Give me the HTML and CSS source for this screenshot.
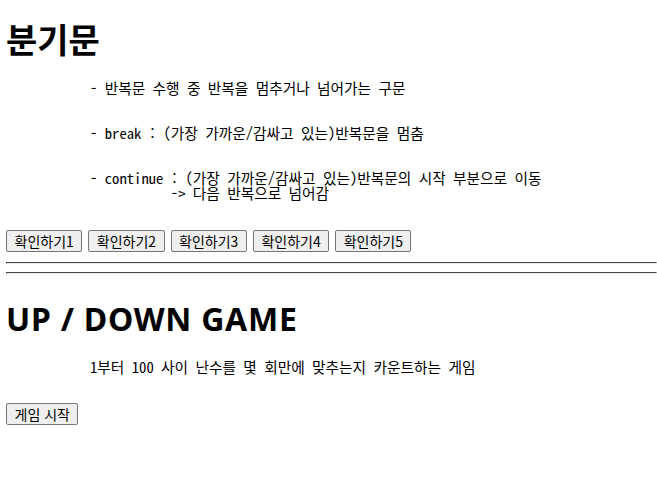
FILE: index.html
```html
<!DOCTYPE html>
<html lang="ko">
<head>
<meta charset="utf-8">
<title>분기문</title>
<link rel="stylesheet" href="styles.css">
</head>
<body>
<h1 class="title first">분기문</h1>
<pre class="desc">- 반복문 수행 중 반복을 멈추거나 넘어가는 구문


- break : (가장 가까운/감싸고 있는)반복문을 멈춤


- continue : (가장 가까운/감싸고 있는)반복문의 시작 부분으로 이동
           -&gt; 다음 반복으로 넘어감</pre>
<div class="btns">
<button class="btn">확인하기1</button>
<button class="btn">확인하기2</button>
<button class="btn">확인하기3</button>
<button class="btn">확인하기4</button>
<button class="btn">확인하기5</button>
</div>
<hr class="rule">
<hr class="rule">
<h1 class="title second">UP / DOWN GAME</h1>
<pre class="desc game">1부터 100 사이 난수를 몇 회만에 맞추는지 카운트하는 게임</pre>
<button class="btn start">게임 시작</button>
</body>
</html>
```
FILE: styles.css
```css
html, body {
  background: #ffffff;
}
body {
  margin: 0 0 0 6px;
  padding-top: 0;
  color: #000000;
  font-family: "Noto Sans", "Noto Sans CJK KR", sans-serif;
}
.title {
  font-family: "Noto Sans", "Noto Sans CJK KR", sans-serif;
  font-weight: 700;
  font-size: 32px;
  line-height: 40px;
  margin: 0;
}
.title.first {
  font-size: 34px;
  margin: 20px 0 19.5px;
}
.title.second {
  letter-spacing: 0.75px;
  margin: 25px 0 20px;
}
.desc {
  font-family: "Noto Sans Mono CJK KR", "Liberation Mono", "Noto Sans CJK KR", monospace;
  font-size: 14.7px;
  line-height: 15px;
  margin: 0;
  padding-left: 84px;
}
.btns {
  display: flex;
  gap: 6px;
  margin: 30px 0 10px;
}
.btn {
  font-family: "Noto Sans CJK KR", sans-serif;
  font-size: 14px;
  line-height: 18px;
  color: #000000;
  background: #efefef;
  border: 1px solid #767676;
  border-radius: 2px;
  padding: 1px 7.5px;
  margin: 0;
}
.rule {
  margin: 8px 0;
  border: 1px inset;
  color: #9a9a9a;
  border-color: #9a9a9a #eeeeee #eeeeee #9a9a9a;
  height: 0;
}
.start {
  margin-top: 29px;
}
```
